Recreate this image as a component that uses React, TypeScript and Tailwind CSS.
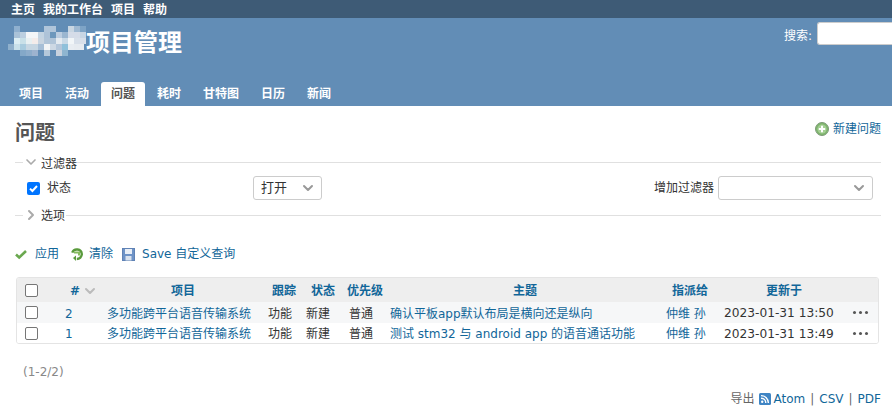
import { ChevronDown, ChevronRight } from 'lucide-react';

const cjk = 'font-["DejaVu_Sans","Noto_Sans_CJK_SC",sans-serif]';

// blurred logo blocks: x, y, w, h, colour
const mosaic: [number, number, number, number, string][] = [
  [14, 0, 6, 6, '#8fb0cf'],
  [44, 0, 12, 6, '#b0c5da'],
  [68, 0, 6, 6, '#c9d6e2'],
  [74, 0, 6, 6, '#9fb9d2'],
  [80, 0, 8, 6, '#7ea4c6'],
  [14, 6, 6, 6, '#a9c2d8'],
  [20, 6, 6, 6, '#bccfe0'],
  [26, 6, 12, 6, '#f4f6f8'],
  [38, 6, 6, 6, '#c4d4e2'],
  [44, 6, 6, 6, '#aec3d8'],
  [50, 6, 6, 6, '#6d97bc'],
  [56, 6, 6, 6, '#bccde0'],
  [62, 6, 6, 6, '#9bb6d0'],
  [68, 6, 12, 6, '#d5dce8'],
  [80, 6, 8, 6, '#c8d6e4'],
  [14, 12, 6, 6, '#dceef4'],
  [20, 12, 6, 6, '#c9e0e8'],
  [26, 12, 6, 6, '#e8f0f2'],
  [32, 12, 6, 6, '#f4ecea'],
  [38, 12, 6, 6, '#c8d4e0'],
  [44, 12, 12, 6, '#b0c4d8'],
  [56, 12, 6, 6, '#e4eaf0'],
  [62, 12, 6, 6, '#c9d9e6'],
  [68, 12, 6, 6, '#f2f6f8'],
  [74, 12, 12, 6, '#d8e0ea'],
  [8, 18, 6, 6, '#8fb0cc'],
  [14, 18, 6, 6, '#c8e0ea'],
  [20, 18, 6, 6, '#a8cbde'],
  [26, 18, 12, 6, '#c6d6e2'],
  [38, 18, 6, 6, '#a6bed6'],
  [44, 18, 6, 6, '#f2f4f6'],
  [50, 18, 6, 6, '#cdd8e4'],
  [56, 18, 6, 6, '#b4c6da'],
  [62, 18, 6, 6, '#8fc0da'],
  [68, 18, 6, 6, '#e8edf2'],
  [74, 18, 10, 6, '#e6ebf0'],
  [20, 24, 6, 6, '#84a8c8'],
  [26, 24, 6, 6, '#8eadcb'],
  [32, 24, 6, 6, '#9db3cf'],
  [44, 24, 6, 6, '#b5c8da'],
  [56, 24, 6, 6, '#c9d2de'],
  [62, 24, 6, 6, '#8fb5d0'],
];

const tabs = ['项目', '活动', '问题', '耗时', '甘特图', '日历', '新闻'];

const rows = [
  { id: 2, subject: '确认平板app默认布局是横向还是纵向', time: '2023-01-31 13:50', bg: 'bg-[#f6f7f8]', h: 'h-[21px]' },
  { id: 1, subject: '测试 stm32 与 android app 的语音通话功能', time: '2023-01-31 13:49', bg: 'bg-white', h: 'h-[20px]' },
];

const cols = 'grid grid-cols-[47px_43px_161px_38px_41px_43px_276px_58px_128px_1fr] items-center whitespace-nowrap pt-[2px]';

const Box = () => (
  <span className="block w-[13px] h-[13px] ml-[8px] -mt-[2px] rounded-[2px] border border-[#767676] bg-white" />
);

const Dots = () => (
  <span className="flex gap-[3px] pl-px -mt-[2px]">
    <span className="w-[3px] h-[3px] rounded-full bg-[#555]" />
    <span className="w-[3px] h-[3px] rounded-full bg-[#555]" />
    <span className="w-[3px] h-[3px] rounded-full bg-[#555]" />
  </span>
);

const App = () => {
  return (
    <div className={`w-[892px] h-[419px] overflow-hidden bg-white text-[12px] text-[#333] ${cjk}`}>
      {/* Top menu */}
      <div className="h-[18px] bg-[#3e5b76] pl-[11px] pt-[2px] flex items-center gap-[8px] font-bold text-white leading-[16px]">
        <span>主页</span>
        <span>我的工作台</span>
        <span>项目</span>
        <span>帮助</span>
      </div>

      {/* Header */}
      <div className="relative h-[88px] bg-[#628db6] text-white">
        <div className="flex items-start h-[46px]">
          <svg width="86" height="30" viewBox="0 0 86 30" className="shrink-0 mt-[8px]">
            {mosaic.map(([x, y, w, h, fill], i) => (
              <rect key={i} x={x} y={y} width={w} height={h} fill={fill} />
            ))}
          </svg>
          <span className="text-[24px] font-bold leading-[30px] mt-[10px]">项目管理</span>
        </div>
        <div className="absolute top-[4px] right-0 flex items-center gap-[5px]">
          <span className="mt-[4px]">搜索:</span>
          <span className="block w-[75px] h-[23px] rounded-l-[3px] border border-[#ccc] border-r-0 bg-white" />
        </div>
        <div className="absolute left-[9px] bottom-0 flex gap-[2px] font-bold leading-[23px]">
          {tabs.map((t) => (
            <span
              key={t}
              className={t === '问题' ? 'px-[10px] pt-px bg-white text-[#555] rounded-t-[3px]' : 'px-[10px] pt-px text-white'}
            >
              {t}
            </span>
          ))}
        </div>
      </div>

      {/* Content */}
      <div className="px-[16px]">
        <div className="flex justify-between items-start pt-[15px] h-[49px] -mr-[5px]">
          <h2 className="text-[20px] font-bold text-[#555] leading-[24px] -ml-[1px]">问题</h2>
          <span className="flex items-center gap-[4px] text-[#169] -mt-[1px]">
            <svg width="14" height="14" viewBox="0 0 14 14">
              <circle cx="7" cy="7" r="6.5" fill="#7fb56e" stroke="#7d9a78" />
              <circle cx="7" cy="7" r="4.6" fill="#a4cf94" />
              <path d="M7 3.8v6.4M3.8 7h6.4" stroke="#fff" strokeWidth="2" />
            </svg>
            新建问题
          </span>
        </div>

        {/* Filters */}
        <div className="flex items-center h-[14px] -ml-px -mr-[5px]">
          <span className="w-[8px] h-px bg-[#e0e0e0]" />
          <ChevronDown className="w-[16px] h-[16px] mr-[2px] text-[#aaa]" strokeWidth={2.5} />
          <span className="pt-[4px]">过滤器</span>
          <span className="flex-1 h-px bg-[#e0e0e0]" />
        </div>
        <div className="flex items-center h-[24px] mt-[7px] mr-[3px]">
          <span className="flex items-center justify-center w-[13px] h-[13px] ml-[11px] rounded-[2px] bg-[#0075ff]">
            <svg width="11" height="11" viewBox="0 0 11 11">
              <path d="M2 5.6l2.4 2.4L9 3" fill="none" stroke="#fff" strokeWidth="2" />
            </svg>
          </span>
          <span className="ml-[7px]">状态</span>
          <span className="ml-[182px] flex items-center justify-between w-[69px] h-[24px] pl-[7px] pr-[5px] border border-[#ccc] rounded-[3px] bg-white text-[13px]">
            打开
            <ChevronDown className="w-[16px] h-[16px] text-[#999]" strokeWidth={3} />
          </span>
          <span className="ml-auto mr-[4px]">增加过滤器</span>
          <span className="flex items-center justify-end w-[155px] h-[24px] pr-[5px] border border-[#ccc] rounded-[3px] bg-white">
            <ChevronDown className="w-[16px] h-[16px] text-[#999]" strokeWidth={3} />
          </span>
        </div>
        <div className="flex items-center h-[14px] mt-[8px] -ml-px -mr-[5px]">
          <span className="w-[8px] h-px bg-[#e0e0e0]" />
          <ChevronRight className="w-[16px] h-[16px] mr-[2px] text-[#aaa]" strokeWidth={3} />
          <span className="pt-[2px]">选项</span>
          <span className="flex-1 h-px bg-[#e0e0e0] ml-px" />
        </div>

        {/* Query actions */}
        <div className="flex items-center h-[16px] mt-[24px] text-[#169] -ml-px">
          <svg width="12" height="12" viewBox="0 0 12 12" className="mr-[8px]">
            <path d="M1 6.5l3.2 3L11 3" fill="none" stroke="#6aa84f" strokeWidth="2.6" />
          </svg>
          <span className="mr-[11px]">应用</span>
          <svg width="14" height="14" viewBox="0 0 14 14" className="mr-[5px]">
            <path d="M2.2 5.6a5 5 0 0 1 9.6 1.4 5 5 0 0 1-5 5" fill="none" stroke="#5a9a3c" strokeWidth="2.4" />
            <path d="M4 5.4h5v3" fill="none" stroke="#86bb5e" strokeWidth="2" />
            <path d="M6 14L3 11l3-2.5z" fill="#5a9a3c" />
          </svg>
          <span className="mr-[9px]">清除</span>
          <svg width="13" height="13" viewBox="0 0 13 13" className="mr-[7px]">
            <rect x="0.5" y="0.5" width="12" height="12" fill="#6e93c7" stroke="#5f82b5" />
            <rect x="3" y="1" width="7" height="5" fill="#e8eef6" />
            <rect x="3.5" y="8" width="6" height="4.5" fill="#d9e2ee" />
          </svg>
          <span>Save 自定义查询</span>
        </div>

        {/* Issues table */}
        <div className="mt-[15px] -mr-[3px] border border-[#e4e4e4] rounded-[3px] overflow-hidden">
          <div className={`${cols} h-[24px] bg-[#eeeeee] font-bold text-[#169]`}>
            <Box />
            <span className="flex items-center pl-[6px]">
              #
              <ChevronDown className="w-[16px] h-[16px] ml-[2px] text-[#bbb]" strokeWidth={3} />
            </span>
            <span className="pl-[64px]">项目</span>
            <span className="pl-[4px]">跟踪</span>
            <span className="pl-[5px]">状态</span>
            <span>优先级</span>
            <span className="pl-[123px]">主题</span>
            <span className="pl-[6px]">指派给</span>
            <span className="pl-[42px]">更新于</span>
            <span />
          </div>
          {rows.map((r) => (
            <div key={r.id} className={`${cols} ${r.h} ${r.bg}`}>
              <Box />
              <span className="text-[#169] pl-px">{r.id}</span>
              <span className="text-[#169]">多功能跨平台语音传输系统</span>
              <span>功能</span>
              <span>新建</span>
              <span className="pl-[2px]">普通</span>
              <span className="text-[#169]">{r.subject}</span>
              <span className="text-[#169]">仲维 孙</span>
              <span className="text-[12.2px]">{r.time}</span>
              <Dots />
            </div>
          ))}
        </div>

        <p className="mt-[20px] pl-[7px] text-[#888] leading-[16px]">(1-2/2)</p>

        <div className="flex justify-end items-center gap-[5px] mt-[11px] -mr-[5px] text-[#169] leading-[16px]">
          <span className="text-[#666] mr-[-1px]">导出</span>
          <svg width="12" height="12" viewBox="0 0 12 12" className="mr-[-2px]">
            <rect width="12" height="12" rx="1.5" fill="#3f85c4" />
            <circle cx="3.2" cy="8.8" r="1.2" fill="#fff" />
            <path d="M2 5.2a4.8 4.8 0 0 1 4.8 4.8M2 2.6A7.4 7.4 0 0 1 9.4 10" fill="none" stroke="#fff" strokeWidth="1.4" />
          </svg>
          <span>Atom</span>
          <span className="text-[#666]">|</span>
          <span>CSV</span>
          <span className="text-[#666]">|</span>
          <span>PDF</span>
        </div>
      </div>
    </div>
  );
};

export default App;
